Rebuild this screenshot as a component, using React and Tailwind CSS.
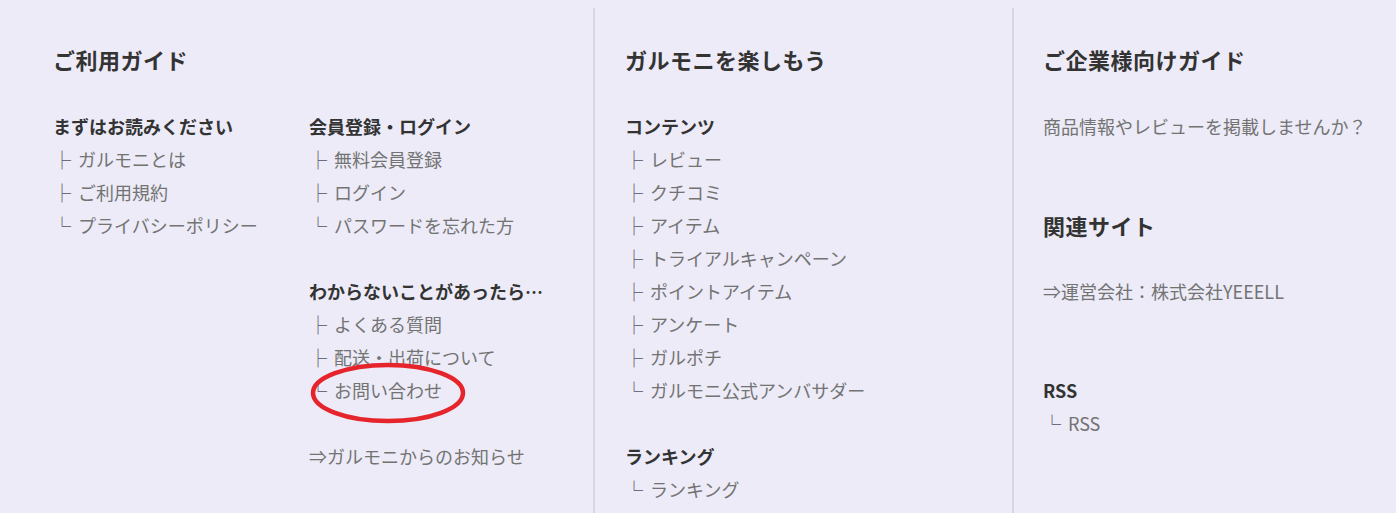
import React from "react";

const FONT = { fontFamily: '"Noto Sans CJK JP", "Noto Sans", sans-serif' };

function Item({ mark, children }) {
  return (
    <div className="flex h-[33px] items-center text-[18px] text-[#737373] leading-[33px]">
      <span className="inline-block w-[25px] text-[#55525f]">{mark}</span>
      <span>{children}</span>
    </div>
  );
}

function Sub({ children, className = "" }) {
  return (
    <div className={"h-[33px] text-[18px] font-bold text-[#333] leading-[33px] " + className}>
      {children}
    </div>
  );
}

function Plain({ children, className = "" }) {
  return (
    <div className={"h-[33px] text-[18px] text-[#737373] leading-[33px] " + className}>
      {children}
    </div>
  );
}

function Heading({ children, className = "" }) {
  return (
    <div className={"h-[33px] text-[22px] font-bold text-[#333] leading-[33px] tracking-[0.5px] " + className}>
      {children}
    </div>
  );
}

export default function App() {
  return (
    <div style={FONT} className="flex w-[1396px] h-[513px] overflow-hidden bg-[#ecebf7] pt-[8px]">
      {/* Section 1 */}
      <div className="relative w-[595px] shrink-0 border-r-2 border-[#d8d7e0] pl-[53px] pt-[35px]">
        <Heading>ご利用ガイド</Heading>
        <div className="mt-[34px] flex">
          <div className="w-[256px]">
            <Sub>まずはお読みください</Sub>
            <Item mark="├">ガルモニとは</Item>
            <Item mark="├">ご利用規約</Item>
            <Item mark="└">プライバシーポリシー</Item>
          </div>
          <div>
            <Sub>会員登録・ログイン</Sub>
            <Item mark="├">無料会員登録</Item>
            <Item mark="├">ログイン</Item>
            <Item mark="└">パスワードを忘れた方</Item>
            <Sub className="mt-[33px]">わからないことがあったら…</Sub>
            <Item mark="├">よくある質問</Item>
            <Item mark="├">配送・出荷について</Item>
            <Item mark="└">お問い合わせ</Item>
            <Plain className="mt-[33px]">⇒ガルモニからのお知らせ</Plain>
          </div>
        </div>
        <svg
          className="absolute left-[309px] top-[354px] pointer-events-none"
          width="158"
          height="64"
          viewBox="0 0 158 64"
        >
          <ellipse cx="79" cy="31" rx="75" ry="28" fill="none" stroke="#e5242b" strokeWidth="4.5" />
        </svg>
      </div>

      {/* Section 2 */}
      <div className="w-[419px] shrink-0 border-r-2 border-[#d8d7e0] pl-[30px] pt-[35px]">
        <Heading>ガルモニを楽しもう</Heading>
        <div className="mt-[34px]">
          <Sub>コンテンツ</Sub>
          <Item mark="├">レビュー</Item>
          <Item mark="├">クチコミ</Item>
          <Item mark="├">アイテム</Item>
          <Item mark="├">トライアルキャンペーン</Item>
          <Item mark="├">ポイントアイテム</Item>
          <Item mark="├">アンケート</Item>
          <Item mark="├">ガルポチ</Item>
          <Item mark="└">ガルモニ公式アンバサダー</Item>
          <Sub className="mt-[33px]">ランキング</Sub>
          <Item mark="└">ランキング</Item>
        </div>
      </div>

      {/* Section 3 */}
      <div className="flex-1 pl-[29px] pt-[35px]">
        <Heading>ご企業様向けガイド</Heading>
        <div className="mt-[34px]">
          <Plain>商品情報やレビューを掲載しませんか？</Plain>
          <Heading className="mt-[66px]">関連サイト</Heading>
          <Plain className="mt-[33px]">⇒運営会社：株式会社YEEELL</Plain>
          <Sub className="mt-[66px]">RSS</Sub>
          <Item mark="└">RSS</Item>
        </div>
      </div>
    </div>
  );
}
